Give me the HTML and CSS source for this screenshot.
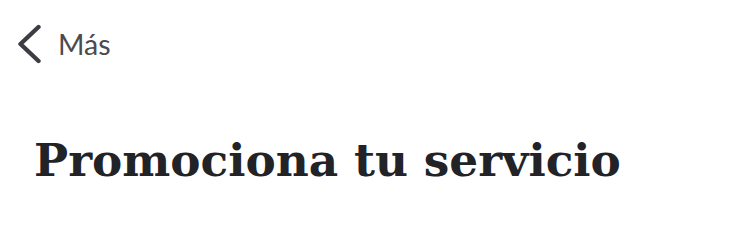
FILE: index.html
```html
<!DOCTYPE html>
<html lang="es">
<head>
<meta charset="utf-8">
<link rel="stylesheet" href="styles.css">
</head>
<body>
<div class="page">
  <a class="back" href="#">
    <svg class="chev" width="26" height="40" viewBox="0 0 26 40" aria-hidden="true">
      <path d="M22.5 3 L4.5 20 L22.5 37" fill="none" stroke="#3d3e43" stroke-width="4.4" stroke-linecap="round" stroke-linejoin="round"/>
    </svg>
    <span class="back-label">Más</span>
  </a>
  <h1 class="title">Promociona tu servicio</h1>
</div>
</body>
</html>
```
FILE: styles.css
```css
html, body {
  margin: 0;
  padding: 0;
  background: #ffffff;
}
.page {
  width: 750px;
  height: 233px;
  overflow: hidden;
}
.back {
  display: flex;
  align-items: center;
  gap: 16px;
  padding: 24px 0 0 16px;
  text-decoration: none;
  color: #4a4b50;
}
.chev {
  display: block;
}
.back-label {
  font-family: Lato, "Noto Sans", sans-serif;
  font-size: 28.5px;
  color: #4a4b50;
  line-height: 40px;
}
.title {
  margin: 68px 0 0 34px;
  font-family: "DejaVu Serif", serif;
  font-weight: bold;
  font-size: 45.4px;
  line-height: 56px;
  color: #222326;
}
```
